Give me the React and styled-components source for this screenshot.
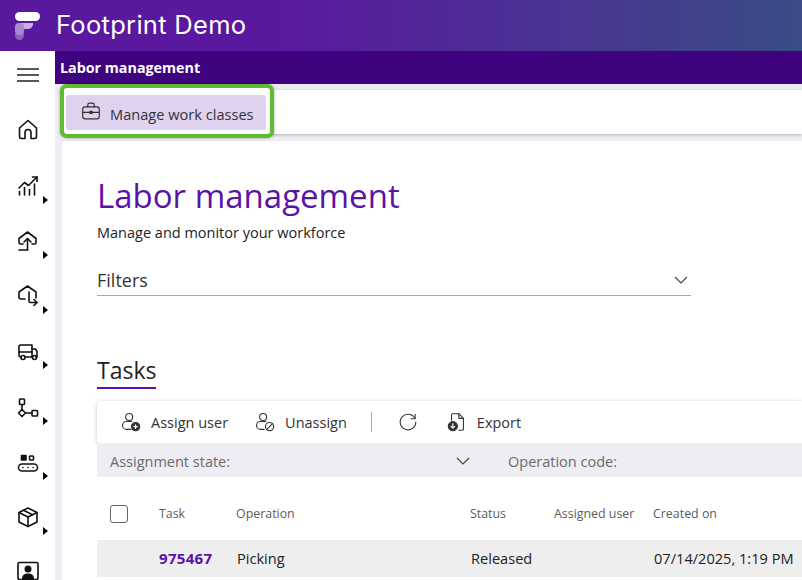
import React from "react";
import styled, { createGlobalStyle } from "styled-components";

const GlobalStyle = createGlobalStyle`
  html, body {
    margin: 0;
    height: 100%;
    overflow: hidden;
    background: #eeedf3;
    font-family: "Open Sans", "Noto Sans", sans-serif;
    color: #222;
  }
  * { box-sizing: border-box; }
`;

const Page = styled.div`
  width: 802px;
  height: 580px;
  overflow: hidden;
  display: flex;
  flex-direction: column;
`;

const Header = styled.header`
  height: 51px;
  flex: none;
  display: flex;
  align-items: center;
  gap: 16px;
  padding-left: 14px;
  background: linear-gradient(90deg, #5a189f 0%, #5a189f 35%, #3a4c86 100%);
`;

const AppName = styled.div`
  font-family: "Inter", sans-serif;
  font-size: 25.5px;
  font-weight: 400;
  letter-spacing: 0.3px;
  color: #fff;
  margin-top: -2px;
`;

const Body = styled.div`
  flex: 1;
  display: flex;
  min-height: 0;
`;

const Sidebar = styled.nav`
  width: 55px;
  flex: none;
  background: #fff;
  display: flex;
  flex-direction: column;
  align-items: flex-start;
  padding: 12px 0 0 16px;
`;

const NavItem = styled.div`
  position: relative;
  width: 24px;
  height: 24px;
  flex: none;
  margin-bottom: 31.3px;
  color: #111;
  display: flex;
  align-items: center;
  justify-content: center;
`;

const NavArrow = styled.span`
  position: absolute;
  left: 27px;
  top: 22px;
  width: 0;
  height: 0;
  border-left: 5px solid #000;
  border-top: 4px solid transparent;
  border-bottom: 4px solid transparent;
`;

const Main = styled.main`
  flex: 1;
  min-width: 0;
  display: flex;
  flex-direction: column;
`;

const TitleBar = styled.div`
  height: 33px;
  flex: none;
  background: #3f0380;
  color: #fff;
  font-family: "Open Sans", sans-serif;
  font-weight: 700;
  font-size: 14.3px;
  line-height: 34px;
  padding-left: 5px;
`;

const ActionBar = styled.div`
  position: relative;
  height: 44px;
  flex: none;
  margin: 6px 0 7px 7px;
  background: #fff;
  box-shadow: 0 1px 3px rgba(0, 0, 0, 0.25);
`;

const Highlight = styled.div`
  position: absolute;
  left: -2px;
  top: -6px;
  width: 214px;
  height: 54px;
  padding: 3px 2px 0 0;
  border: 4px solid #5fbc2f;
  border-radius: 7px;
  box-shadow: 0 0 3px rgba(0, 0, 0, 0.35);
  background: #fff;
  display: flex;
  align-items: center;
  justify-content: center;
`;

const PrimaryButton = styled.div`
  width: 200px;
  height: 35px;
  border-radius: 3px;
  background: #e0d1ee;
  display: flex;
  align-items: center;
  gap: 8px;
  padding: 2px 0 0 14px;
  font-size: 14.6px;
  color: #333;
  svg {
    margin-top: -6px;
  }
`;

const Card = styled.section`
  flex: 1;
  margin-left: 7px;
  background: #fff;
  border-radius: 4px 0 0 0;
  padding: 33px 0 0 35px;
  min-height: 0;
  overflow: hidden;
`;

const PageTitle = styled.h1`
  margin: 0;
  font-size: 33px;
  font-weight: 400;
  line-height: 44px;
  color: #5a13a8;
`;

const Subtitle = styled.div`
  font-size: 14.5px;
  line-height: 20px;
  margin-top: 5px;
  color: #222;
`;

const FilterRow = styled.div`
  width: 594px;
  height: 33px;
  margin-top: 20px;
  padding: 2px 3px 0 0;
  border-bottom: 1px solid #a8a8a8;
  display: flex;
  align-items: center;
  justify-content: space-between;
  font-size: 18px;
  color: #333;
`;

const SectionTab = styled.div`
  display: inline-block;
  margin-top: 56px;
  height: 37px;
  border-bottom: 2px solid #5a13a8;
  font-size: 23px;
  line-height: 37px;
  color: #222;
`;

const TaskToolbar = styled.div`
  margin-top: 12px;
  height: 42px;
  background: #fff;
  border-radius: 4px 0 0 4px;
  box-shadow: 0 1px 4px rgba(0, 0, 0, 0.25);
  display: flex;
  align-items: center;
  padding-left: 23px;
  font-size: 14.5px;
  color: #333;
`;

const ToolButton = styled.div`
  display: flex;
  align-items: center;
  gap: 9px;
  margin-right: ${(props) => props.space}px;
  white-space: nowrap;
`;

const ToolDivider = styled.div`
  width: 1px;
  height: 20px;
  background: #aaa;
  margin-right: 25px;
`;

const FilterBar = styled.div`
  height: 34px;
  background: #eeedf3;
  display: flex;
  align-items: center;
  padding: 2px 0 0 13px;
  font-size: 14.5px;
  color: #6a6a6a;
`;

const FilterField = styled.div`
  width: ${(props) => props.width}px;
  flex: none;
  margin-left: ${(props) => props.gap || 0}px;
  display: flex;
  align-items: center;
  justify-content: space-between;
  padding-right: 3px;
  white-space: nowrap;
`;

const TableRow = styled.div`
  display: grid;
  grid-template-columns: 62px 77px 234px 84px 99px 1fr;
  align-items: center;
  height: ${(props) => props.height}px;
  margin-top: ${(props) => props.top}px;
  background: ${(props) => props.bg || "transparent"};
  white-space: nowrap;
`;

const HeadCell = styled.div`
  font-size: 12.4px;
  color: #5c5c5c;
  padding-bottom: 2px;
`;

const Cell = styled.div`
  font-size: 14.6px;
  color: #222;
  padding: 0 0 2px 1px;
`;

const TaskLink = styled(Cell)`
  font-size: 15px;
  font-weight: 700;
  letter-spacing: 0.3px;
  padding-left: 0;
  color: #5a13a8;
`;

const Checkbox = styled.div`
  width: 18px;
  height: 18px;
  margin-left: 13px;
  border: 1px solid #666;
  border-radius: 3px;
  background: #fff;
`;

const Logo = () => (
  <svg width="26" height="30" viewBox="0 0 26 30">
    <rect x="1" y="1" width="25" height="9" rx="4.5" fill="#fff" />
    <path d="M5 12h14a5 5 0 0 1-5 6H5a4 4 0 0 1 0-6z" fill="#c9b0e6" />
    <rect x="1" y="20" width="9" height="9" rx="4.5" fill="#8a63bf" />
    <rect x="1" y="12" width="9" height="12" rx="4" fill="#a98ad2" />
  </svg>
);

const Icon = ({ children, size = 24, view = 24, sw = 1.6 }) => (
  <svg
    width={size}
    height={size}
    viewBox={`0 0 ${view} ${view}`}
    fill="none"
    stroke="currentColor"
    strokeWidth={sw}
    strokeLinecap="round"
    strokeLinejoin="round"
  >
    {children}
  </svg>
);

const MenuLines = () => (
  <svg width="22" height="14" viewBox="0 0 22 14" stroke="#222" strokeWidth="1.3">
    <path d="M0 1h22M0 7h22M0 13h22" />
  </svg>
);

const navIcons = [
  { key: "home", d: ["M3.500 10 12 2.500l8.500 7.500V18.500a2 2 0 0 1-2 2H15v-6a3 3 0 0 0-6 0v6H5.500a2 2 0 0 1-2-2z"] },
  {
    key: "chart",
    arrow: true,
    d: ["M3 14 8.500 8.500l4 3L21 3", "M16.500 3H21v4.500", "M3.500 17.500V21", "M8.500 13.500V21", "M13.500 15.500V21", "M18.500 10V21"],
  },
  {
    key: "inbound",
    arrow: true,
    d: ["M7 15H4.500a1.500 1.500 0 0 1-1.500-1.500V9.500L11.500 3 20 9.500v4a1.500 1.500 0 0 1-1.500 1.500H16", "M11.500 21V10", "M8 13l3.500-3.500L15 13", "M3 21h8.500"],
  },
  {
    key: "outbound",
    arrow: true,
    d: ["M9 15H5a2 2 0 0 1-2-2V8l8.500-6L20 8v6", "M13 8v9a1.500 1.500 0 0 0 1.500 1.500H21", "M18 15.500l3 3-3 3"],
  },
  {
    key: "truck",
    arrow: true,
    d: ["M5 18H4.500A1.500 1.500 0 0 1 3 16.500V7.500A1.500 1.500 0 0 1 4.500 6H16V18H9.500", "M16 10h3.500l1.500 2.500v5.500h-1", "M16 18h0.500", "M3 13h13"],
    circles: [[7, 18.500], [18.500, 18.500]],
  },
  {
    key: "flow",
    arrow: true,
    d: ["M6 9.500v5", "M9.500 18H16", "M6 14.500 9.500 18 6 21.500 2.500 18z"],
    rects: [[3.500, 4, 5, 5.500], [16, 15.500, 5.500, 5.500]],
  },
  {
    key: "conveyor",
    arrow: true,
    d: ["M6 14h12a3.500 3.500 0 0 1 0 7H6a3.500 3.500 0 0 1 0-7z", "M7 17.500h.01", "M12 17.500h.01", "M17 17.500h.01"],
    rects: [[13.500, 6, 4, 4]],
    solid: [[5.500, 5.500, 4.500, 4.500]],
  },
  {
    key: "box",
    arrow: true,
    d: ["M12 3 21 7.500v9.500l-9 4.500L3 17V7.500z", "M3 7.500l9 4.500 9-4.500", "M12 12v9.500", "M7.500 5.200l9 4.500"],
  },
];

const NavIcon = ({ item }) => (
  <Icon>
    {item.d.map((d) => (
      <path key={d} d={d} />
    ))}
    {item.circles &&
      item.circles.map(([cx, cy]) => <circle key={cx} cx={cx} cy={cy} r="2" />)}
    {item.rects &&
      item.rects.map(([x, y, w, h]) => <rect key={x} x={x} y={y} width={w} height={h} rx="0.800" />)}
    {item.solid &&
      item.solid.map(([x, y, w, h]) => <rect key={x} x={x} y={y} width={w} height={h} fill="currentColor" />)}
  </Icon>
);

const ProfileIcon = () => (
  <svg width="24" height="24" viewBox="0 0 24 24">
    <rect x="2" y="1.500" width="20" height="17" rx="1.500" fill="none" stroke="#111" strokeWidth="1.600" />
    <circle cx="12" cy="8" r="3.500" fill="#111" />
    <path d="M6 18c0-4 2.500-5.500 6-5.500s6 1.500 6 5.500z" fill="#111" />
  </svg>
);

const BriefcaseIcon = () => (
  <Icon size={22} sw={1.3}>
    <rect x="3" y="7.500" width="18" height="13" rx="2.500" />
    <path d="M8.500 7.500V5.500a2 2 0 0 1 2-2h3a2 2 0 0 1 2 2v2" />
    <path d="M3 13.500h18" />
    <rect x="10.800" y="12.300" width="2.400" height="2.400" fill="currentColor" />
  </Icon>
);

const Chevron = ({ width = 14 }) => (
  <svg width={width} height="8" viewBox="0 0 14 8" fill="none" stroke="#444" strokeWidth="1.200">
    <path d="M1 1l6 6 6-6" />
  </svg>
);

const AssignIcon = () => (
  <Icon size={22} sw={1.200}>
    <circle cx="10" cy="6.500" r="3.800" />
    <path d="M12 20H7a4 4 0 0 1 0-8.500h6" />
    <circle cx="17" cy="17" r="4.500" fill="currentColor" />
    <path d="M17 15v4M15 17h4" stroke="#fff" />
  </Icon>
);

const UnassignIcon = () => (
  <Icon size={22} sw={1.200}>
    <circle cx="10" cy="6.500" r="3.800" />
    <path d="M11 20H7a4 4 0 0 1 0-8.500h6" />
    <circle cx="17" cy="17" r="4.500" />
    <path d="M14 20l6-6" />
  </Icon>
);

const RefreshIcon = () => (
  <Icon size={22} sw={1.200}>
    <path d="M19.500 8A8.500 8.500 0 1 0 20.500 12" />
    <path d="M15.500 8.500h4.300V3.500" />
  </Icon>
);

const ExportIcon = () => (
  <Icon size={22} sw={1.200}>
    <path d="M6 10V4.500A1.500 1.500 0 0 1 7.500 3H14l5 5v11.500a1.500 1.500 0 0 1-1.500 1.500H14" />
    <path d="M14 3v5h5" />
    <circle cx="7.500" cy="16.500" r="5" fill="currentColor" />
    <path d="M7.500 13.800v5M5.500 16.800l2 2 2-2" stroke="#fff" />
  </Icon>
);

export default function App() {
  return (
    <>
      <GlobalStyle />
      <Page>
        <Header>
          <Logo />
          <AppName>Footprint Demo</AppName>
        </Header>
        <Body>
          <Sidebar>
            <NavItem>
              <MenuLines />
            </NavItem>
            {navIcons.map((item) => (
              <NavItem key={item.key}>
                <NavIcon item={item} />
                {item.arrow && <NavArrow />}
              </NavItem>
            ))}
            <NavItem>
              <ProfileIcon />
            </NavItem>
          </Sidebar>
          <Main>
            <TitleBar>Labor management</TitleBar>
            <ActionBar>
              <Highlight>
                <PrimaryButton>
                  <BriefcaseIcon />
                  Manage work classes
                </PrimaryButton>
              </Highlight>
            </ActionBar>
            <Card>
              <PageTitle>Labor management</PageTitle>
              <Subtitle>Manage and monitor your workforce</Subtitle>
              <FilterRow>
                Filters
                <Chevron />
              </FilterRow>
              <SectionTab>Tasks</SectionTab>
              <TaskToolbar>
                <ToolButton space={26}>
                  <AssignIcon />
                  Assign user
                </ToolButton>
                <ToolButton space={24}>
                  <UnassignIcon />
                  Unassign
                </ToolButton>
                <ToolDivider />
                <ToolButton space={27}>
                  <RefreshIcon />
                </ToolButton>
                <ToolButton space={0}>
                  <ExportIcon />
                  Export
                </ToolButton>
              </TaskToolbar>
              <FilterBar>
                <FilterField width={363}>
                  Assignment state:
                  <Chevron />
                </FilterField>
                <FilterField width={150} gap={35}>
                  Operation code:
                </FilterField>
              </FilterBar>
              <TableRow height={36} top={19}>
                <Checkbox />
                <HeadCell>Task</HeadCell>
                <HeadCell>Operation</HeadCell>
                <HeadCell>Status</HeadCell>
                <HeadCell>Assigned user</HeadCell>
                <HeadCell>Created on</HeadCell>
              </TableRow>
              <TableRow height={37} top={8} bg="#eeeeee">
                <span />
                <TaskLink>975467</TaskLink>
                <Cell>Picking</Cell>
                <Cell>Released</Cell>
                <span />
                <Cell>07/14/2025, 1:19 PM</Cell>
              </TableRow>
            </Card>
          </Main>
        </Body>
      </Page>
    </>
  );
}
